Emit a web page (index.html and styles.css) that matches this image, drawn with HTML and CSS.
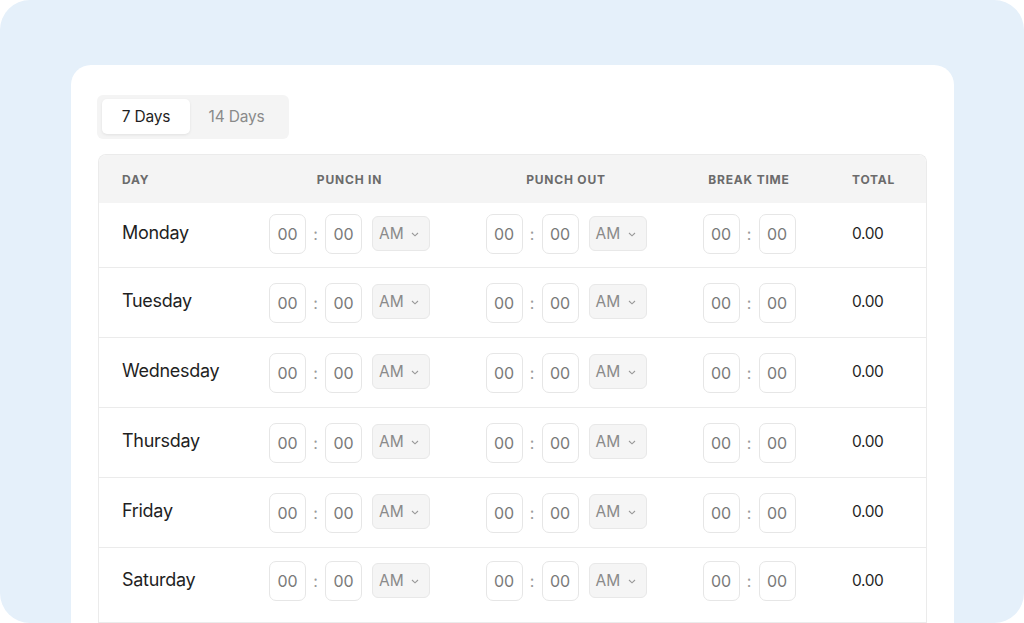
FILE: index.html
```html
<!DOCTYPE html>
<html lang="en">
<head>
    <meta charset="UTF-8">
    <meta name="viewport" content="width=device-width, initial-scale=1.0">
    <title>Timesheet Calculator</title>
    <link rel="stylesheet" href="styles.css">
</head>
<body>
    <div class="frame">
        <div class="card">
            <div class="tabs">
                <button class="tab active">7 Days</button>
                <button class="tab">14 Days</button>
            </div>

            <div class="sheet">
                <div class="row head">
                    <div class="cell day">Day</div>
                    <div class="cell">Punch In</div>
                    <div class="cell">Punch Out</div>
                    <div class="cell">Break Time</div>
                    <div class="cell total">Total</div>
                </div>

                <div class="row first">
                    <div class="cell day">Monday</div>
                    <div class="cell"><div class="time"><input class="box" value="00"><span class="colon">:</span><input class="box" value="00"><div class="ampm">AM<svg width="8" height="5" viewBox="0 0 8 5"><polyline points="1,1 4,3.8 7,1" fill="none" stroke="#999" stroke-width="1.1"/></svg></div></div></div>
                    <div class="cell"><div class="time"><input class="box" value="00"><span class="colon">:</span><input class="box" value="00"><div class="ampm">AM<svg width="8" height="5" viewBox="0 0 8 5"><polyline points="1,1 4,3.8 7,1" fill="none" stroke="#999" stroke-width="1.1"/></svg></div></div></div>
                    <div class="cell"><div class="time"><input class="box" value="00"><span class="colon">:</span><input class="box" value="00"></div></div>
                    <div class="cell total">0.00</div>
                </div>

                <div class="row">
                    <div class="cell day">Tuesday</div>
                    <div class="cell"><div class="time"><input class="box" value="00"><span class="colon">:</span><input class="box" value="00"><div class="ampm">AM<svg width="8" height="5" viewBox="0 0 8 5"><polyline points="1,1 4,3.8 7,1" fill="none" stroke="#999" stroke-width="1.1"/></svg></div></div></div>
                    <div class="cell"><div class="time"><input class="box" value="00"><span class="colon">:</span><input class="box" value="00"><div class="ampm">AM<svg width="8" height="5" viewBox="0 0 8 5"><polyline points="1,1 4,3.8 7,1" fill="none" stroke="#999" stroke-width="1.1"/></svg></div></div></div>
                    <div class="cell"><div class="time"><input class="box" value="00"><span class="colon">:</span><input class="box" value="00"></div></div>
                    <div class="cell total">0.00</div>
                </div>

                <div class="row">
                    <div class="cell day">Wednesday</div>
                    <div class="cell"><div class="time"><input class="box" value="00"><span class="colon">:</span><input class="box" value="00"><div class="ampm">AM<svg width="8" height="5" viewBox="0 0 8 5"><polyline points="1,1 4,3.8 7,1" fill="none" stroke="#999" stroke-width="1.1"/></svg></div></div></div>
                    <div class="cell"><div class="time"><input class="box" value="00"><span class="colon">:</span><input class="box" value="00"><div class="ampm">AM<svg width="8" height="5" viewBox="0 0 8 5"><polyline points="1,1 4,3.8 7,1" fill="none" stroke="#999" stroke-width="1.1"/></svg></div></div></div>
                    <div class="cell"><div class="time"><input class="box" value="00"><span class="colon">:</span><input class="box" value="00"></div></div>
                    <div class="cell total">0.00</div>
                </div>

                <div class="row">
                    <div class="cell day">Thursday</div>
                    <div class="cell"><div class="time"><input class="box" value="00"><span class="colon">:</span><input class="box" value="00"><div class="ampm">AM<svg width="8" height="5" viewBox="0 0 8 5"><polyline points="1,1 4,3.8 7,1" fill="none" stroke="#999" stroke-width="1.1"/></svg></div></div></div>
                    <div class="cell"><div class="time"><input class="box" value="00"><span class="colon">:</span><input class="box" value="00"><div class="ampm">AM<svg width="8" height="5" viewBox="0 0 8 5"><polyline points="1,1 4,3.8 7,1" fill="none" stroke="#999" stroke-width="1.1"/></svg></div></div></div>
                    <div class="cell"><div class="time"><input class="box" value="00"><span class="colon">:</span><input class="box" value="00"></div></div>
                    <div class="cell total">0.00</div>
                </div>

                <div class="row">
                    <div class="cell day">Friday</div>
                    <div class="cell"><div class="time"><input class="box" value="00"><span class="colon">:</span><input class="box" value="00"><div class="ampm">AM<svg width="8" height="5" viewBox="0 0 8 5"><polyline points="1,1 4,3.8 7,1" fill="none" stroke="#999" stroke-width="1.1"/></svg></div></div></div>
                    <div class="cell"><div class="time"><input class="box" value="00"><span class="colon">:</span><input class="box" value="00"><div class="ampm">AM<svg width="8" height="5" viewBox="0 0 8 5"><polyline points="1,1 4,3.8 7,1" fill="none" stroke="#999" stroke-width="1.1"/></svg></div></div></div>
                    <div class="cell"><div class="time"><input class="box" value="00"><span class="colon">:</span><input class="box" value="00"></div></div>
                    <div class="cell total">0.00</div>
                </div>

                <div class="row last">
                    <div class="cell day">Saturday</div>
                    <div class="cell"><div class="time"><input class="box" value="00"><span class="colon">:</span><input class="box" value="00"><div class="ampm">AM<svg width="8" height="5" viewBox="0 0 8 5"><polyline points="1,1 4,3.8 7,1" fill="none" stroke="#999" stroke-width="1.1"/></svg></div></div></div>
                    <div class="cell"><div class="time"><input class="box" value="00"><span class="colon">:</span><input class="box" value="00"><div class="ampm">AM<svg width="8" height="5" viewBox="0 0 8 5"><polyline points="1,1 4,3.8 7,1" fill="none" stroke="#999" stroke-width="1.1"/></svg></div></div></div>
                    <div class="cell"><div class="time"><input class="box" value="00"><span class="colon">:</span><input class="box" value="00"></div></div>
                    <div class="cell total">0.00</div>
                </div>
            </div>
        </div>
    </div>
</body>
</html>
```
FILE: styles.css
```css
* {
    margin: 0;
    padding: 0;
    box-sizing: border-box;
}
body {
    background: #fff;
    font-family: Inter, "Liberation Sans", sans-serif;
    color: #1f1f1f;
}
.frame {
    width: 1024px;
    height: 623px;
    background: #e5f0fa;
    border-radius: 30px;
    overflow: hidden;
    padding: 65px 0 0 71px;
}
.card {
    width: 883px;
    height: 600px;
    background: #fff;
    border-radius: 20px 20px 0 0;
    padding: 30px 26px 0;
}
.tabs {
    display: inline-flex;
    background: #f4f4f4;
    border-radius: 6px;
    padding: 4px 6px 5px 5px;
}
.tab {
    width: 88px;
    height: 35px;
    border: none;
    border-radius: 5px;
    background: transparent;
    font-family: inherit;
    font-size: 15.5px;
    letter-spacing: -0.2px;
    color: #8a8a8a;
}
.tab + .tab {
    width: 93px;
}
.tab.active {
    background: #fff;
    color: #1f1f1f;
    box-shadow: 0 1px 3px rgba(0, 0, 0, 0.08);
}
.sheet {
    margin: 15px 1px 0;
    border: 1px solid #ebebeb;
    border-bottom: none;
    border-radius: 8px 8px 0 0;
    overflow: hidden;
}
.row {
    display: grid;
    grid-template-columns: 151px 199px 234px 132px 1fr;
    align-items: center;
    height: 70px;
    border-bottom: 1px solid #ebebeb;
}
.row.head {
    height: 48px;
    background: #f4f4f4;
    border-bottom: none;
}
.row.first {
    height: 65px;
    padding-bottom: 2px;
}
.row.last {
    height: 75px;
    padding-bottom: 8px;
}
.cell {
    display: flex;
    justify-content: center;
}
.head .cell {
    font-size: 12px;
    font-weight: 700;
    text-transform: uppercase;
    letter-spacing: 0.8px;
    color: #6b6b6b;
    padding-top: 1px;
}
.cell.day {
    justify-content: flex-start;
    padding-left: 23px;
}
.row:not(.head) .cell.day {
    font-size: 18px;
    letter-spacing: -0.3px;
    margin-top: -4px;
}
.cell.total {
    justify-content: flex-start;
    padding-left: 37px;
}
.row:not(.head) .cell.total {
    font-size: 15.5px;
    letter-spacing: -0.4px;
    margin-top: -2px;
}
.time {
    display: flex;
    align-items: center;
}
.box {
    width: 37px;
    height: 40px;
    border: 1px solid #e6e6e6;
    border-radius: 7px;
    text-align: center;
    font-family: inherit;
    font-size: 16px;
    color: #7a7a7a;
    background: #fff;
    outline: none;
}
.colon {
    width: 19px;
    text-align: center;
    font-size: 16px;
    color: #9a9a9a;
}
.ampm {
    display: flex;
    align-items: center;
    justify-content: space-between;
    width: 58px;
    height: 35px;
    margin-left: 10px;
    margin-top: -2px;
    padding: 0 10px 0 6px;
    background: #f5f5f5;
    border: 1px solid #e8e8e8;
    border-radius: 6px;
    font-size: 15.5px;
    color: #8a8a8a;
}
.ampm svg {
    margin-top: 2px;
}
```
